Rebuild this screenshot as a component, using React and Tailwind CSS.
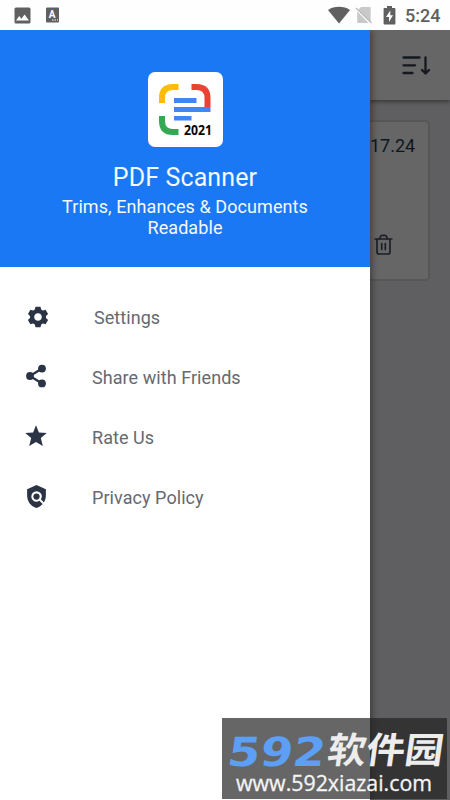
import { MdPolicy } from "react-icons/md";

function StatusBar() {
  return (
    <header className="relative z-20 flex h-[30px] shrink-0 items-center bg-[#fefefe] text-[#606060]">
      <svg className="ml-[14px] h-[17px] w-[17px]" viewBox="0 0 17 17">
        <rect x="0.5" y="0.5" width="16" height="16" rx="1.5" fill="currentColor" />
        <path d="M2 13.5 5.2 9l2.2 2.7 3.2-4.3 4.4 6.1z" fill="#fff" />
      </svg>
      <svg className="ml-[14px] h-4 w-[15px]" viewBox="0 0 15 16">
        <rect x="1" y="0.5" width="13" height="15" rx="1" fill="currentColor" />
        <text x="7" y="11" textAnchor="middle" fontFamily="Roboto, sans-serif" fontWeight="700" fontSize="10" fill="#fff">A</text>
        <path d="M7 13h1.5M9.5 13H11M12 13h1" stroke="#fff" strokeWidth="1.2" />
      </svg>
      <div className="ml-auto flex items-center">
        <svg className="h-[18px] w-6" viewBox="0 0 24 18">
          <path d="M1 4C7-.2 17-.2 23 4L12 17.5z" fill="currentColor" />
        </svg>
        <svg className="ml-[4px] h-[18px] w-[18px]" viewBox="0 0 18 18">
          <path d="M6 1h8.5c.8 0 1.2.4 1.2 1.2V16L3.2 3.7zM2.2 5.2 13.5 17H3.3c-.7 0-1.1-.4-1.1-1.1z" fill="#c9c9c9" />
          <path d="m1 2 15.5 15" stroke="#b8b8b8" strokeWidth="1.1" />
        </svg>
        <svg className="ml-[10px] h-[19px] w-[13px]" viewBox="0 0 13 19">
          <path d="M4 0h5v2h2.4c.6 0 1 .4 1 1v14.5c0 .6-.4 1-1 1H1.6c-.6 0-1-.4-1-1V3c0-.6.4-1 1-1H4z" fill="currentColor" />
          <path d="M7.3 4.500 3 11h3v5l4-6.700H7.300z" fill="#fff" />
        </svg>
        <span className="ml-[9px] mr-[10px] w-[35px] whitespace-nowrap pt-px text-[18px] leading-5 font-medium">5:24</span>
      </div>
    </header>
  );
}

function Logo() {
  return (
    <svg className="h-[75px] w-[75px]" viewBox="0 0 75 75">
      <rect width="75" height="75" rx="7" fill="#fff" />
      <g fill="none" strokeWidth="6">
        <path d="M14 31V26Q14 15 25 15h5.500" stroke="#fbbc05" />
        <path d="M43.500 15h5q11 0 11 11v9" stroke="#ea4335" />
        <path d="M14 44v5q0 11 11 11h5.500" stroke="#34a853" />
      </g>
      <path d="M26 26h22.500v5H26zM26 35h36.500v5H26zM26 44h17.500v4.500H26z" fill="#4285f4" />
      <text x="36" y="63" textLength="28" lengthAdjust="spacingAndGlyphs" fontFamily="'Open Sans', sans-serif" fontWeight="700" fontSize="14" fill="#050505">2021</text>
    </svg>
  );
}

const TEETH = [0, 60, 120, 180, 240, 300];

function GearIcon() {
  return (
    <svg className="h-[22px] w-[22px] shrink-0" viewBox="-11 -11 22 22" fill="none">
      <circle r="5.900" stroke="currentColor" strokeWidth="4.200" />
      {TEETH.map((angle) => (
        <path key={angle} d="M-2.500-10.200h5L3.600-6h-7.200z" fill="currentColor" transform={`rotate(${angle})`} />
      ))}
    </svg>
  );
}

function ShareIcon() {
  return (
    <svg className="h-[24px] w-[22px] shrink-0" viewBox="0 0 22 24" fill="currentColor">
      <path d="M17 4.600 5 12l12 7.400" fill="none" stroke="currentColor" strokeWidth="2.300" />
      <circle cx="17" cy="4.600" r="3.900" />
      <circle cx="5" cy="12" r="3.900" />
      <circle cx="17" cy="19.400" r="3.900" />
    </svg>
  );
}

function StarIcon() {
  return (
    <svg className="h-[22px] w-[22px] shrink-0" viewBox="0 0 22 22" fill="currentColor">
      <path d="m11 .2 2.900 7.300 7.900.6-6 5 2 8L11 17l-6.800 4.100 2-8-6-5 7.900-.6z" />
    </svg>
  );
}

function MenuItem({ icon, label, className = "pl-[42px]" }) {
  return (
    <li className="flex h-[60px] items-center pl-[23px]">
      <span className="flex h-[30px] w-[27px] items-center justify-center text-[#2b3445]">{icon}</span>
      <span className={`${className} text-[18px] leading-6 tracking-[0.06px] text-[#666970]`}>{label}</span>
    </li>
  );
}

function Drawer() {
  return (
    <aside className="relative z-10 flex w-[370px] shrink-0 flex-col bg-white shadow-[2px_0_7px_rgba(0,0,0,0.4)]">
      <div className="flex h-[237px] w-full flex-col items-center bg-[#1a78f5] pt-[42px] text-center text-[#f3f9ff]">
        <Logo />
        <h1 className="mt-[16px] text-[25px] leading-[30px] tracking-[0.12px]">PDF Scanner</h1>
        <p className="mt-[3px] w-[270px] text-[18px] leading-[21px] tracking-[0.08px]">
          Trims, Enhances &amp; Documents
          <br />
          Readable
        </p>
      </div>
      <ul className="pt-[21px]">
        <MenuItem icon={<span className="mb-[2px] ml-[2px]"><GearIcon /></span>} label="Settings" className="pl-[44px]" />
        <MenuItem icon={<span className="mr-[2px] mb-[5px]"><ShareIcon /></span>} label="Share with Friends" />
        <MenuItem icon={<span className="mr-[2px] mb-[5px]"><StarIcon /></span>} label="Rate Us" />
        <MenuItem icon={<MdPolicy className="mb-[3px] size-[25px] shrink-0" />} label="Privacy Policy" />
      </ul>
    </aside>
  );
}

function DimmedPage() {
  return (
    <section className="flex min-w-0 flex-1 flex-col bg-[#5f5f61]">
      <div className="flex h-[70px] shrink-0 justify-end bg-[#666] pt-[24px] pr-[19px] shadow-[0_2px_4px_rgba(0,0,0,0.4)]">
        <svg className="h-[24px] w-[30px]" viewBox="0 0 30 24" fill="none" stroke="#15191f" strokeWidth="2.300" strokeLinecap="round" strokeLinejoin="round">
          <path d="M2.500 3.500h16M2.500 11.300h11.500M2.500 19h9M24.500 3.500v16M21 16l3.500 3.500L28 16" />
        </svg>
      </div>
      <div className="mt-[20px] mr-[20px] flex h-[161px] flex-col rounded-r-[5px] border-2 border-l-0 border-[#575758] bg-[#666]">
        <span className="mt-[12px] text-[18px] leading-6 text-[#0c1622]">17.24</span>
        <svg className="mt-[76px] ml-[4px] h-[22px] w-[20px]" viewBox="0 0 20 22" fill="none" stroke="#1b2028" strokeWidth="1.700" strokeLinecap="round" strokeLinejoin="round">
          <path d="M1.200 5h16.600M5.500 5 6.500 2.500Q7 1.400 8 1.400h3q1 0 1.500 1.100l1 2.500M3 5v13q0 2 2 2h9q2 0 2-2V5M7.700 9.500v6M11.300 9.500v6" />
        </svg>
      </div>
    </section>
  );
}

function Watermark() {
  return (
    <div className="absolute top-[718px] left-[222px] z-20 h-[81px] w-[225px] bg-[rgba(33,33,33,0.69)]">
      <svg className="h-[81px] w-[225px]" viewBox="0 0 225 81">
        <g transform="translate(4 47.500) skewX(-8)">
          <text x="0" y="0" textLength="98" lengthAdjust="spacingAndGlyphs" fontFamily="'DejaVu Sans', sans-serif" fontWeight="700" fontSize="40" fill="#5c9ff5">592</text>
        </g>
        <g transform="translate(104 45) skewX(-8)">
          <text x="0" y="0" textLength="116" lengthAdjust="spacingAndGlyphs" fontFamily="'Noto Sans CJK SC', sans-serif" fontWeight="700" fontSize="36" fill="#ededed">软件园</text>
        </g>
        <text x="14" y="72.500" textLength="196" lengthAdjust="spacingAndGlyphs" fontFamily="'Open Sans', 'Noto Sans', sans-serif" fontWeight="500" fontSize="21" fill="#f4f4f4" stroke="#f4f4f4" strokeWidth="0.300">www.592xiazai.com</text>
      </svg>
    </div>
  );
}

export default function App() {
  return (
    <main className="relative flex h-[800px] w-[450px] flex-col overflow-hidden font-['Roboto',sans-serif]">
      <StatusBar />
      <div className="flex min-h-0 flex-1">
        <Drawer />
        <DimmedPage />
      </div>
      <Watermark />
    </main>
  );
}
